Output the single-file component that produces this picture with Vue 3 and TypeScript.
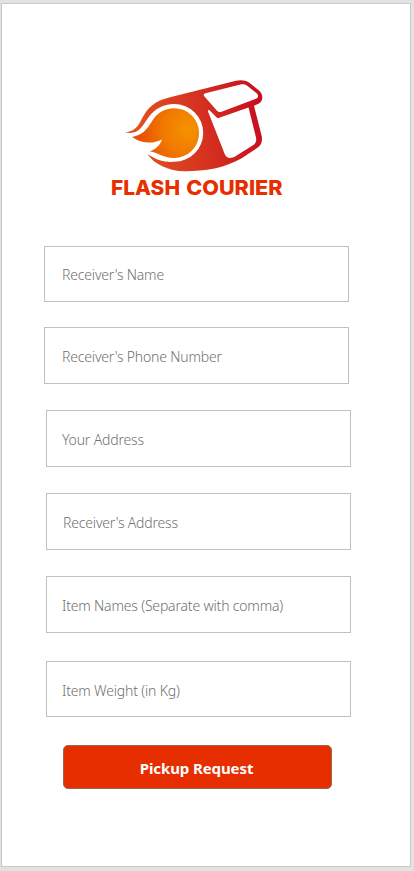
<script setup lang="ts">
import { ref } from 'vue'

interface Field {
  id: string
  label: string
}

const fields: Field[] = [
  { id: 'receiver-name', label: "Receiver's Name" },
  { id: 'receiver-phone', label: "Receiver's Phone Number" },
  { id: 'your-address', label: 'Your Address' },
  { id: 'receiver-address', label: "Receiver's Address" },
  { id: 'item-names', label: 'Item Names (Separate with comma)' },
  { id: 'item-weight', label: 'Item Weight (in Kg)' },
]

const values = ref<Record<string, string>>({})
</script>

<template>
  <main class="screen">
    <svg class="logo" width="180" height="130" viewBox="105 72 180 130" role="img">
      <defs>
        <linearGradient id="shell" gradientUnits="userSpaceOnUse" x1="135" y1="140" x2="262" y2="120">
          <stop offset="0" stop-color="#e2531f" />
          <stop offset="0.5" stop-color="#d63420" />
          <stop offset="1" stop-color="#c80f20" />
        </linearGradient>
        <radialGradient id="flame" gradientUnits="userSpaceOnUse" cx="188" cy="129" r="49">
          <stop offset="0" stop-color="#f59300" />
          <stop offset="0.5" stop-color="#f07a00" />
          <stop offset="1" stop-color="#e94e04" />
        </radialGradient>
      </defs>
      <path
        fill="url(#shell)"
        d="M125 132.2C138 131 139 123 144 115C150 104 160 99.500 172 96.700L235 81C240 79.700 245 79.800 249 82.500L259 90.500C263.500 94.500 263.300 101 259 103.400L254 105.700L261.800 136.500C262.600 142 260.800 145.600 256.700 148.300L241.700 158.300C225 168 205 171.300 185 171.300C168 171 154 164 147.300 154C158 161 166 162.500 174.300 161.800A28.900 28.900 0 0 0 174.300 104C163 104 154.500 109 148 118C142 127 138 135.500 125 132.200Z"
      />
      <path
        fill="url(#flame)"
        d="M132 137C143 135 147 129 151.500 122C157 113 164 108.200 174.200 108.200A24.900 24.900 0 0 1 174.200 158C163 158 156 151.500 149.500 151.600C155 149.500 160 145.500 162 139.500C153 144 142 144 132 137Z"
      />
      <path
        fill="#fff"
        d="M205.500 93.300L239.500 84.700C243 83.900 245.500 84.300 247.500 86L257 93.500C258.500 95 258.500 97.300 256.500 98.500L221.500 111.700C219.500 112.500 217.800 111.800 216.500 110.200L204.300 96.300C203.200 95 203.700 93.800 205.500 93.300ZM209.500 110.300L216.700 117.500C217.500 118.200 218.300 118.100 219.200 117.800L248.500 107.500L256 137.500C256.700 141 255.700 143.600 253 145.300L235 156.500C230 159 226.500 158.300 224.700 154L208.200 112C207.700 110 208.300 109.400 209.500 110.300Z"
      />
      <g class="wordmark">
        <text x="111" y="195.400" textLength="69" lengthAdjust="spacingAndGlyphs">FLASH</text>
        <text x="186.200" y="195.400" textLength="96.300" lengthAdjust="spacingAndGlyphs">COURIER</text>
      </g>
    </svg>

    <form class="form" @submit.prevent>
      <input
        v-for="field in fields"
        :id="field.id"
        :key="field.id"
        v-model="values[field.id]"
        class="field"
        :class="field.id"
        type="text"
        :placeholder="field.label"
      />
      <button class="submit" type="submit">Pickup Request</button>
    </form>
  </main>
</template>

<style>
body {
  background: #e2e2e2;
}
</style>

<style scoped>
.screen {
  box-sizing: border-box;
  display: flex;
  flex-direction: column;
  align-items: flex-start;
  width: 410px;
  height: 864px;
  margin: 3px 0 4px 1px;
  padding-top: 68px;
  border: 1px solid #cacaca;
  background: #fff;
}

.logo {
  display: block;
  margin-left: 103px;
}

.wordmark {
  fill: #e62e00;
  font: 800 20.600px Inter, 'Liberation Sans', sans-serif;
}

.form {
  display: flex;
  flex-direction: column;
  align-items: flex-start;
  width: 100%;
  margin-top: 44px;
}

.field {
  box-sizing: border-box;
  width: 305px;
  height: 57px;
  margin: 0 0 26px 44px;
  padding: 1px 14px 0 15px;
  border: 1px solid #c4bec0;
  border-radius: 0;
  outline: 0;
  background: #fff;
  color: #555;
  font: 300 14px 'Noto Sans', 'Open Sans', sans-serif;
  letter-spacing: -0.180px;
}

.field::placeholder {
  color: #707070;
  opacity: 1;
}

.receiver-name,
.receiver-phone {
  margin-left: 42px;
  padding-left: 17px;
}

.receiver-name {
  height: 56px;
  padding-top: 0;
  margin-bottom: 25px;
}

.receiver-address {
  padding-left: 16px;
}

.item-names {
  margin-bottom: 28px;
}

.item-weight {
  height: 56px;
  padding-top: 2px;
  margin-bottom: 28px;
}

.submit {
  box-sizing: border-box;
  width: 269px;
  height: 44px;
  margin-left: 61px;
  padding: 2px 2px 0 0;
  border: 1px solid #98694f;
  border-radius: 5px;
  background: #e62e00;
  color: #fff;
  font: 700 15px 'Noto Sans', 'Open Sans', sans-serif;
  letter-spacing: -0.100px;
}
</style>
